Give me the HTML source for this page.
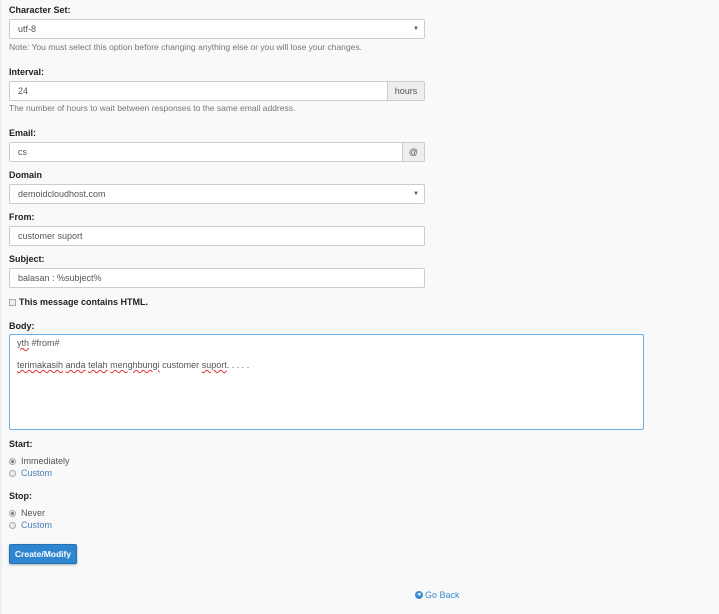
<!DOCTYPE html>
<html><head><style>
body{margin:0;width:719px;height:614px;background:#f9f9f9;font-family:"Liberation Sans",sans-serif;position:relative;overflow:hidden;color:#333}
.e{position:absolute}
.l{font-size:9px;font-weight:bold;color:#222}
.b{position:absolute;left:9px;width:414px;height:18px;background:#fff;border:1px solid #ccc;border-radius:2px;font-size:9px;line-height:18px;text-indent:8px;color:#555}
.h{font-size:8.5px;color:#777}
.ad{position:absolute;top:0;right:0;height:18px;background:#eee;border-left:1px solid #ccc;font-size:9px;text-align:center;text-indent:0;color:#555}
.car{position:absolute;right:5px;top:0;font-size:6px;color:#555;text-indent:0}
.r{position:absolute;left:9px;width:5px;height:5px;border:1px solid #aaa;border-radius:50%;background:#eee}
.r.on::after{content:"";position:absolute;left:1px;top:1px;width:3px;height:3px;border-radius:50%;background:#777}
.rt{font-size:9px;color:#555}
u{text-decoration:underline wavy #d33;text-decoration-thickness:1px}
</style></head><body>
<div class="e" style="left:0;top:0;width:2px;height:614px;background:#eee"></div>
<div class="e l" style="left:9px;top:5px">Character Set:</div>
<div class="b" style="top:19px">utf-8<span class="car">▼</span></div>
<div class="e h" style="left:9px;top:42px">Note: You must select this option before changing anything else or you will lose your changes.</div>
<div class="e l" style="left:9px;top:67px">Interval:</div>
<div class="b" style="top:81px">24<span class="ad" style="width:36px;line-height:18px">hours</span></div>
<div class="e h" style="left:9px;top:103px">The number of hours to wait between responses to the same email address.</div>
<div class="e l" style="left:9px;top:128px">Email:</div>
<div class="b" style="top:142px">cs<span class="ad" style="width:21px">@</span></div>
<div class="e l" style="left:9px;top:170px">Domain</div>
<div class="b" style="top:184px">demoidcloudhost.com<span class="car">▼</span></div>
<div class="e l" style="left:9px;top:212px">From:</div>
<div class="b" style="top:226px">customer suport</div>
<div class="e l" style="left:9px;top:254px">Subject:</div>
<div class="b" style="top:268px">balasan : %subject%</div>
<div class="e" style="left:9px;top:299px;width:5px;height:5px;border:1px solid #aaa;background:#eee"></div>
<div class="e l" style="left:19px;top:297px">This message contains HTML.</div>
<div class="e l" style="left:9px;top:321px">Body:</div>
<div class="e" style="left:9px;top:334px;height:94px;background:#fff;border:1px solid #66afe9;border-radius:2px;font-size:9px;color:#555;padding:0 0 0 7px;width:626px;line-height:11px">
<div style="margin-top:3px"><u>yth</u> #from#</div>
<div style="margin-top:11px"><u>terimakasih</u> <u>anda</u> <u>telah</u> <u>menghbungi</u> customer <u>suport</u>. . . . .</div></div>
<div class="e l" style="left:9px;top:439px">Start:</div>
<div class="r on" style="top:458px"></div><div class="e rt" style="left:21px;top:456px">Immediately</div>
<div class="r" style="top:470px"></div><div class="e rt" style="left:21px;top:468px;color:#4a7ebb">Custom</div>
<div class="e l" style="left:9px;top:491px">Stop:</div>
<div class="r on" style="top:510px"></div><div class="e rt" style="left:21px;top:508px">Never</div>
<div class="r" style="top:522px"></div><div class="e rt" style="left:21px;top:520px;color:#4a7ebb">Custom</div>
<div class="e" style="left:9px;top:544px;width:66px;height:18px;background:#2f86d0;border:1px solid #2470b5;border-radius:2px;color:#fff;font-size:8.5px;font-weight:bold;line-height:18px;text-align:center;box-shadow:0 1px 2px rgba(0,0,0,.3)">Create/Modify</div>
<div class="e" style="left:415px;top:591px;width:8px;height:8px;border-radius:50%;background:#3a8ad0"></div>
<div class="e" style="left:417px;top:591px;font-size:7px;color:#fff;line-height:8px">◂</div>
<div class="e" style="left:425px;top:590px;font-size:9px;color:#3a8ad0">Go Back</div>
</body></html>
